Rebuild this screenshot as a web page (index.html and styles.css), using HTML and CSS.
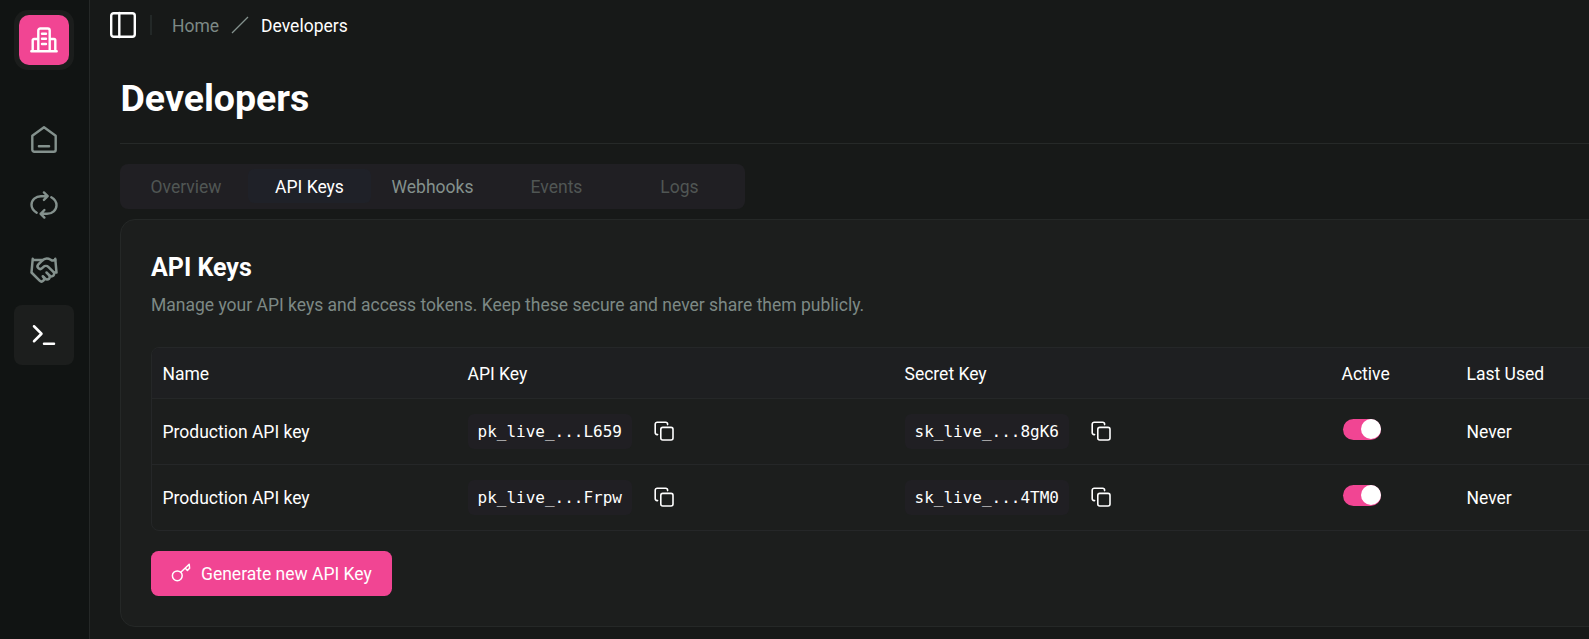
FILE: index.html
```html
<!DOCTYPE html>
<html lang="en">
<head>
<meta charset="utf-8">
<title>Developers</title>
<link rel="stylesheet" href="styles.css">
</head>
<body>
<svg width="0" height="0" class="defs">
  <symbol id="copy" viewBox="0 0 20 20"><rect x="6.8" y="6.4" width="12.2" height="12.6" rx="2"/><path d="M3.6 13.6H3.2a2 2 0 0 1-2-2V3.200a2 2 0 0 1 2-2h8.400a2 2 0 0 1 2 2v.4"/></symbol>
</svg>
<div class="app">
  <aside class="sidebar">
    <div class="logo"><div class="logo-inner">
      <svg class="ic" width="30" height="30" viewBox="0 0 30 30"><path d="M2.300 26.300h25.400M9.300 26V5.500a2 2 0 0 1 2-2h7.400a2 2 0 0 1 2 2V26M3.700 26V15.300a1.300 1.300 0 0 1 1.300-1.300h4.300M20.700 14H25a1.300 1.300 0 0 1 1.300 1.300V26M13 8.700h4M13 13.800h4M13 19h4"/></svg>
    </div></div>
    <nav class="nav">
      <a class="item"><svg class="ic" width="30" height="30" viewBox="0 0 30 30"><path d="M3.300 10.800 15 2.300l11.700 8.500v13.900a2 2 0 0 1-2 2H5.300a2 2 0 0 1-2-2zM9.900 21.300h10.200"/></svg></a>
      <a class="item"><svg class="ic" width="30" height="30" viewBox="0 0 30 30"><path d="M7.700 22.700C4.500 20.800 2.500 18 2.500 14.800 2.500 10 6.800 6.200 12 6.200h6.500M22.300 7.300c3.200 1.900 5.200 4.700 5.200 7.900 0 4.800-4.300 8.600-9.500 8.600h-6.300M14.900 2.400l3.800 3.800-3.800 3.700M15.400 20l-3.800 3.800 3.800 3.800"/></svg></a>
      <a class="item"><svg class="ic" width="30" height="30" viewBox="0 0 24 24"><g class="lu"><path d="m11 17 2 2a1 1 0 1 0 3-3"/><path d="m14 14 2.500 2.500a1 1 0 1 0 3-3l-3.880-3.880a3 3 0 0 0-4.240 0l-.88.88a1 1 0 1 1-3-3l2.810-2.810a5.790 5.790 0 0 1 7.060-.87l.47.28a2 2 0 0 0 1.420.25L21 4"/><path d="m21 3 1 11h-2M3 3 2 14l6.500 6.500a1 1 0 1 0 3-3M3 4h8"/></g></svg></a>
      <a class="item active"><svg class="ic" width="30" height="30" viewBox="0 0 24 24"><g class="lu"><path d="m4 17 6-6-6-6M12 19h8"/></g></svg></a>
    </nav>
  </aside>
  <main class="main">
    <header class="topbar">
      <svg class="ic" width="30" height="30" viewBox="0 0 30 30"><rect x="3.200" y="3.200" width="23.600" height="23.600" rx="2.500"/><path d="M11.300 3v24"/></svg>
      <span class="sep"></span>
      <span class="crumb">Home</span>
      <svg class="slash" width="18" height="18" viewBox="0 0 18 18"><path d="M1 17 17 1"/></svg>
      <span class="crumb current">Developers</span>
    </header>
    <section class="content">
      <h1>Developers</h1>
      <div class="tabs">
        <span class="tab off early">Overview</span><span class="tab on">API Keys</span><span class="tab">Webhooks</span><span class="tab off late">Events</span><span class="tab off late">Logs</span>
      </div>
      <div class="card">
        <h2>API Keys</h2>
        <p class="desc">Manage your API keys and access tokens. Keep these secure and never share them publicly.</p>
        <div class="table">
          <div class="row head"><span>Name</span><span>API Key</span><span>Secret Key</span><span>Active</span><span>Last Used</span></div>
          <div class="row">
            <span class="txt">Production API key</span>
            <span class="key"><code>pk_live_...L659</code><svg class="copy"><use href="#copy"/></svg></span>
            <span class="key"><code>sk_live_...8gK6</code><svg class="copy"><use href="#copy"/></svg></span>
            <span><i class="switch"></i></span><span class="txt">Never</span>
          </div>
          <div class="row">
            <span class="txt">Production API key</span>
            <span class="key"><code>pk_live_...Frpw</code><svg class="copy"><use href="#copy"/></svg></span>
            <span class="key"><code>sk_live_...4TM0</code><svg class="copy"><use href="#copy"/></svg></span>
            <span><i class="switch"></i></span><span class="txt">Never</span>
          </div>
        </div>
        <button class="btn"><svg width="20" height="20" viewBox="0 0 20 20"><circle cx="6.300" cy="12.800" r="4.900"/><path d="M9.800 9.200 18.200 1.200M14.200 5l2.200 2.400 2.200-2.200-.4-4"/></svg><span>Generate new API Key</span></button>
      </div>
    </section>
  </main>
</div>
</body>
</html>
```
FILE: styles.css
```css
* { box-sizing: border-box; }
body { margin: 0; background: #171918; color: #fff; font: 17.5px/25px Roboto, sans-serif; overflow: hidden; }
.defs { position: absolute; }
.app { display: flex; width: 1589px; height: 639px; overflow: hidden; }
.sidebar { width: 90px; flex: none; background: #111413; border-right: 1px solid #252827; padding: 10px 0 0 14px; }
.logo { width: 60px; height: 60px; border-radius: 14px; background: #1b1d1c; padding: 5px; }
.logo-inner { height: 50px; border-radius: 10px; background: #f14593; display: grid; place-items: center; }
.ic { fill: none; stroke: currentColor; stroke-width: 2.4; stroke-linecap: round; stroke-linejoin: round; display: block; }
.lu { stroke-width: 2; }
.nav { margin-top: 40px; display: flex; flex-direction: column; gap: 5px; color: #84918d; }
.item { width: 60px; height: 60px; border-radius: 8px; display: grid; place-items: center; }
.item.active { background: #1c1e1d; color: #fff; }
.main { flex: 1; min-width: 0; }
.topbar { height: 50px; display: flex; align-items: center; padding-left: 18px; }
.sep { width: 2px; height: 20px; background: #232827; margin: 0 20px 0 12px; }
.crumb { color: #7d8985; padding-top: 2px; }
.slash { fill: none; stroke: #84918d; stroke-width: 1.2; margin: 0 12px; }
.crumb.current { color: #fff; }
.content { padding-left: 30px; width: 1600px; }
h1 { margin: 0; height: 94px; padding: 26px 0 0 .5px; font-size: 37.5px; line-height: 45px; font-weight: 700; letter-spacing: 0; border-bottom: 1px solid #262928; }
.tabs { margin-top: 20px; width: 625px; height: 45px; border-radius: 8px; background: #201f23; padding: 5px; display: grid; grid-template-columns: repeat(5, 1fr); }
.tab { height: 34px; line-height: 37px; text-align: center; border-radius: 6px; color: #84918d; }
.tab.off { color: #505654; }
.tab.early { padding-right: 1px; }
.tab.late { padding-left: 2px; }
.tab.on { background: #1f2128; color: #fff; }
.card { margin-top: 10px; height: 408px; border: 1px solid #252827; border-radius: 15px; background: #1c1e1d; padding: 30px; }
h2 { margin: 0; font-size: 25px; line-height: 35px; font-weight: 700; }
.desc { margin: 8px 0 0; color: #7d8985; }
.table { margin-top: 29px; border: 1px solid #252728; border-radius: 8px; overflow: hidden; }
.row { display: grid; grid-template-columns: 305px 437px 437px 125px 1fr; height: 66px; align-items: center; border-bottom: 1px solid #252728; }
.row:last-child { border-bottom: 0; height: 65px; }
.row > span { padding-left: 10.5px; }
.row > .txt, .row.head > span { padding-top: 2px; }
.row.head { height: 51px; background: #1e1f21; }
.key { display: flex; align-items: center; }
code { font: 16px/25px "DejaVu Sans Mono", monospace; background: #201f23; border-radius: 6px; height: 35px; padding: 5px 10px; }
.copy { width: 20px; height: 20px; margin: 0 0 2px 22px; fill: none; stroke: #fff; stroke-width: 1.6; stroke-linecap: round; }
.switch { display: flex; justify-content: flex-end; width: 38px; height: 21px; border-radius: 11px; background: #f14593; margin: -4px 0 0 1.5px; }
.switch::after { content: ""; width: 20px; height: 20px; border-radius: 50%; background: #fff; }
.btn { margin-top: 20px; width: 241px; height: 45px; border: 0; border-radius: 7.5px; background: #f14593; color: #fff; font: inherit; display: flex; align-items: center; padding: 0 0 0 20px; gap: 10px; }
.btn span { padding-top: 1px; }
.btn svg { margin-bottom: 1px; fill: none; stroke: #fff; stroke-width: 1.5; stroke-linecap: round; stroke-linejoin: round; }
```
